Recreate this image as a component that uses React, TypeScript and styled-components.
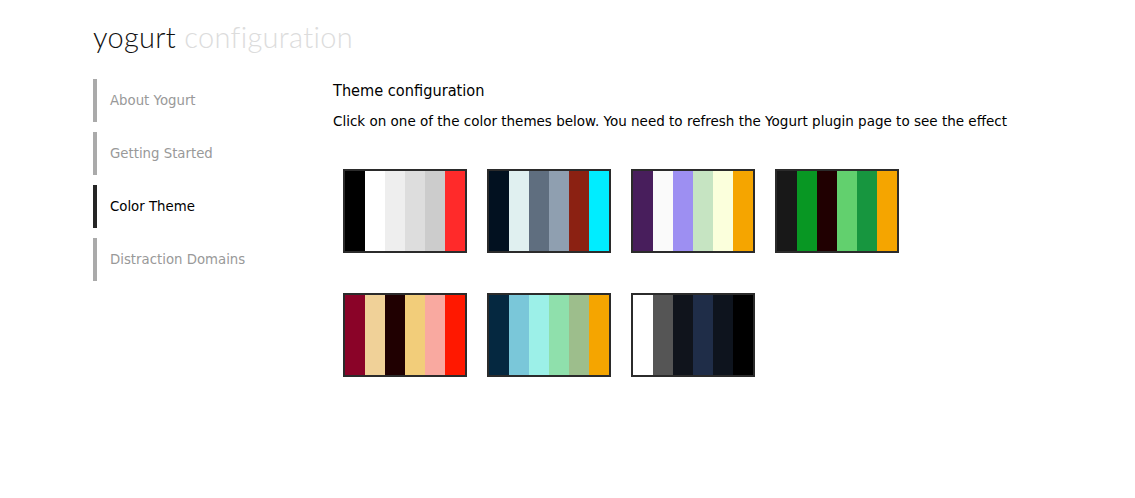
import React from "react";
import styled, { createGlobalStyle } from "styled-components";

const GlobalStyle = createGlobalStyle`
  html, body {
    margin: 0;
    padding: 0;
    background: #fff;
  }
`;

const Page = styled.div`
  width: 1135px;
  min-height: 498px;
  padding: 17px 0 0 93px;
  box-sizing: border-box;
`;

const Logo = styled.h1`
  margin: 0;
  font-family: "Lato", "Open Sans", sans-serif;
  font-weight: 300;
  font-size: 29px;
  line-height: 40px;
  letter-spacing: 0.3px;
  color: #111;
  span {
    color: #dcdcdc;
  }
`;

const Layout = styled.div`
  display: flex;
  margin-top: 22px;
`;

const Nav = styled.nav`
  width: 240px;
  display: flex;
  flex-direction: column;
  gap: 10px;
`;

const NavItem = styled.a<{ $active?: boolean }>`
  display: flex;
  align-items: center;
  height: 43px;
  padding-left: 13px;
  border-left: 4px solid ${(p) => (p.$active ? "#262626" : "#aaaaaa")};
  font-family: "DejaVu Sans", Verdana, sans-serif;
  font-size: 13.3px;
  color: ${(p) => (p.$active ? "#000" : "#999999")};
  text-decoration: none;
  cursor: pointer;
`;

const Main = styled.main`
  flex: 1;
  padding-top: 2px;
`;

const Heading = styled.h2`
  margin: 0;
  font-family: "DejaVu Sans Condensed", "DejaVu Sans", sans-serif;
  font-weight: normal;
  font-size: 16.2px;
  line-height: 20px;
  color: #000;
`;

const Intro = styled.p`
  margin: 10px 0 0;
  font-family: "DejaVu Sans", Verdana, sans-serif;
  font-size: 13.5px;
  line-height: 20px;
  color: #000;
`;

const Grid = styled.div`
  display: flex;
  flex-wrap: wrap;
  width: 576px;
  margin-top: 38px;
`;

const Swatch = styled.button`
  display: flex;
  margin: 0 10px 40px;
  padding: 0;
  width: 124px;
  height: 84px;
  border: 2px solid #2b2b2b;
  background: #2b2b2b;
  cursor: pointer;
`;

const Stripe = styled.span<{ $c: string }>`
  flex: 1;
  background: ${(p) => p.$c};
`;

const themes: string[][] = [
  ["#000000", "#ffffff", "#eeeeee", "#dddddd", "#cccccc", "#ff2a2a"],
  ["#021120", "#e0f0f0", "#5f6e7f", "#8f9fb0", "#8b2112", "#00edff"],
  ["#481e5c", "#fafafa", "#9d8ff2", "#c6e4c2", "#fbffdc", "#f5a500"],
  ["#181818", "#089723", "#200001", "#62d06e", "#17963f", "#f5a500"],
  ["#8a0328", "#f0d198", "#200001", "#f2cd7a", "#f9a9a0", "#ff1800"],
  ["#052840", "#7ac7d9", "#9cf0e8", "#8fe0ac", "#9dbe8c", "#f5a500"],
  ["#ffffff", "#555555", "#10141c", "#1f2d48", "#0e141e", "#000000"],
];

const navItems = ["About Yogurt", "Getting Started", "Color Theme", "Distraction Domains"];

export default function App() {
  return (
    <Page>
      <GlobalStyle />
      <Logo>
        yogurt <span>configuration</span>
      </Logo>
      <Layout>
        <Nav>
          {navItems.map((item) => (
            <NavItem key={item} $active={item === "Color Theme"}>
              {item}
            </NavItem>
          ))}
        </Nav>
        <Main>
          <Heading>Theme configuration</Heading>
          <Intro>
            Click on one of the color themes below. You need to refresh the Yogurt plugin page to see the effect
          </Intro>
          <Grid>
            {themes.map((t, i) => (
              <Swatch key={i}>
                {t.map((c, j) => (
                  <Stripe key={j} $c={c} />
                ))}
              </Swatch>
            ))}
          </Grid>
        </Main>
      </Layout>
    </Page>
  );
}
